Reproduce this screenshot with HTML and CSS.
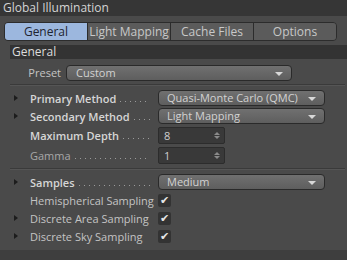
FILE: index.html
```html
<!DOCTYPE html>
<html lang="en">
<head>
  <meta charset="UTF-8">
  <title>Global Illumination</title>
  <link rel="stylesheet" href="styles.css">
</head>
<body>
    <div class="panel">
        <div class="title">Global Illumination</div>
        <div class="tabs">
            <div class="tab active">General</div>
            <div class="tab">Light Mapping</div>
            <div class="tab">Cache Files</div>
            <div class="tab">Options</div>
        </div>
        <div class="section-head">General</div>

        <div class="row preset-row">
            <div class="label plain">Preset</div>
            <div class="dropdown preset-drop">Custom<span class="arrow"></span></div>
        </div>
        <div class="sep"></div>

        <div class="row">
            <span class="twisty"></span>
            <div class="label bold"><span>Primary Method</span><span class="dots"></span></div>
            <div class="dropdown">Quasi-Monte Carlo (QMC)<span class="arrow"></span></div>
        </div>
        <div class="row">
            <span class="twisty"></span>
            <div class="label bold"><span>Secondary Method</span><span class="dots"></span></div>
            <div class="dropdown">Light Mapping<span class="arrow"></span></div>
        </div>
        <div class="row tall">
            <span class="twisty none"></span>
            <div class="label bold"><span>Maximum Depth</span><span class="dots"></span></div>
            <div class="number"><span>8</span><span class="spin"></span></div>
        </div>
        <div class="row tall">
            <span class="twisty none"></span>
            <div class="label dim"><span>Gamma</span><span class="dots"></span></div>
            <div class="number"><span>1</span><span class="spin"></span></div>
        </div>
        <div class="sep"></div>

        <div class="row">
            <span class="twisty"></span>
            <div class="label bold"><span>Samples</span><span class="dots"></span></div>
            <div class="dropdown">Medium<span class="arrow"></span></div>
        </div>
        <div class="row">
            <span class="twisty none"></span>
            <div class="label"><span>Hemispherical Sampling</span></div>
            <div class="check">&#10004;</div>
        </div>
        <div class="row">
            <span class="twisty"></span>
            <div class="label"><span>Discrete Area Sampling</span></div>
            <div class="check">&#10004;</div>
        </div>
        <div class="row">
            <span class="twisty"></span>
            <div class="label"><span>Discrete Sky Sampling</span></div>
            <div class="check">&#10004;</div>
        </div>
        <div class="bottom"></div>
    </div>
</body>
</html>
```

FILE: styles.css
```css
body {
    margin: 0;
    background-color: #4a4a4a;
    font-family: "Open Sans", "Noto Sans", sans-serif;
    font-size: 11px;
    color: #c4c4c4;
}
.panel {
    width: 347px;
    height: 260px;
    display: flex;
    flex-direction: column;
    overflow: hidden;
}
.title {
    height: 16px;
    line-height: 15px;
    padding-left: 3px;
    background-color: #363636;
    color: #d4d4d4;
    font-size: 12px;
}
.tabs {
    display: flex;
    margin: 6px 10px 0 4px;
    height: 17px;
    border: 1px solid #2c2c2c;
    border-radius: 4px;
    overflow: hidden;
}
.tab {
    flex: 1;
    text-align: center;
    line-height: 17px;
    font-size: 12px;
    background-color: #5b5b5b;
    color: #c8c8c8;
    border-left: 1px solid #2c2c2c;
}
.tab:first-child {
    border-left: none;
}
.tab.active {
    background-color: #9cb7de;
    color: #1e2430;
}
.section-head {
    margin: 4px 0 0 10px;
    height: 14px;
    line-height: 14px;
    padding-left: 2px;
    background-color: #333333;
    color: #dcdcdc;
    font-size: 12px;
}
.row {
    display: flex;
    align-items: center;
    height: 18px;
    padding-left: 14px;
}
.row.tall {
    height: 20px;
}
.preset-row {
    height: 17px;
    margin-top: 5px;
    padding-left: 0;
}
.label {
    width: 122px;
    display: flex;
    align-items: stretch;
    white-space: nowrap;
    margin-right: 6px;
}
.label.plain {
    width: 61px;
    justify-content: flex-end;
    margin-right: 5px;
}
.label.bold {
    color: #d6d6d6;
    font-weight: 600;
}
.label.dim {
    color: #a8a8a8;
}
/* dotted leader drawn as background so no text spills into the control */
.dots {
    flex: 1;
    margin-left: 4px;
    margin-right: 2px;
    background-image: linear-gradient(to right, #9a9a9a 1px, transparent 1px);
    background-size: 5px 1px;
    background-repeat: repeat-x;
    background-position: left bottom 4px;
}
.twisty {
    width: 0;
    height: 0;
    border-top: 3px solid transparent;
    border-bottom: 3px solid transparent;
    border-left: 4px solid #1c1c1c;
    margin-right: 12px;
}
.twisty.none {
    border-left-color: transparent;
}
.sep {
    height: 1px;
    margin: 3px 2px 3px 10px;
    background-color: #3a3a3a;
    border-bottom: 1px solid #555555;
}
.dropdown {
    position: relative;
    width: 157px;
    height: 14px;
    line-height: 14px;
    padding-left: 8px;
    border: 1px solid #2a2a2a;
    border-radius: 4px;
    background: linear-gradient(#707070, #5e5e5e);
    color: #d2d2d2;
    font-size: 11px;
}
.preset-drop {
    width: 215px;
    padding-left: 9px;
}
.arrow {
    position: absolute;
    right: 8px;
    top: 6px;
    border-left: 4px solid transparent;
    border-right: 4px solid transparent;
    border-top: 4px solid #d8d8d8;
}
.number {
    display: flex;
    justify-content: space-between;
    align-items: center;
    width: 56px;
    height: 15px;
    line-height: 15px;
    padding: 0 4px 0 5px;
    border: 1px solid #2c2c2c;
    border-radius: 2px;
    background-color: #393939;
    color: #cfcfcf;
    font-size: 11px;
}
.spin {
    position: relative;
    width: 0;
    height: 0;
    margin-bottom: 4px;
    border-left: 3px solid transparent;
    border-right: 3px solid transparent;
    border-bottom: 3px solid #8a8a8a;
}
.spin::after {
    content: "";
    position: absolute;
    left: -3px;
    top: 4px;
    border-left: 3px solid transparent;
    border-right: 3px solid transparent;
    border-top: 3px solid #8a8a8a;
}
.check {
    width: 13px;
    height: 13px;
    line-height: 13px;
    text-align: center;
    border-radius: 2px;
    background-color: #333333;
    color: #e6e6e6;
    font-size: 11px;
    font-family: "DejaVu Sans", sans-serif;
}
.bottom {
    margin-top: auto;
    height: 10px;
    background-color: #3e3e3e;
}
```
